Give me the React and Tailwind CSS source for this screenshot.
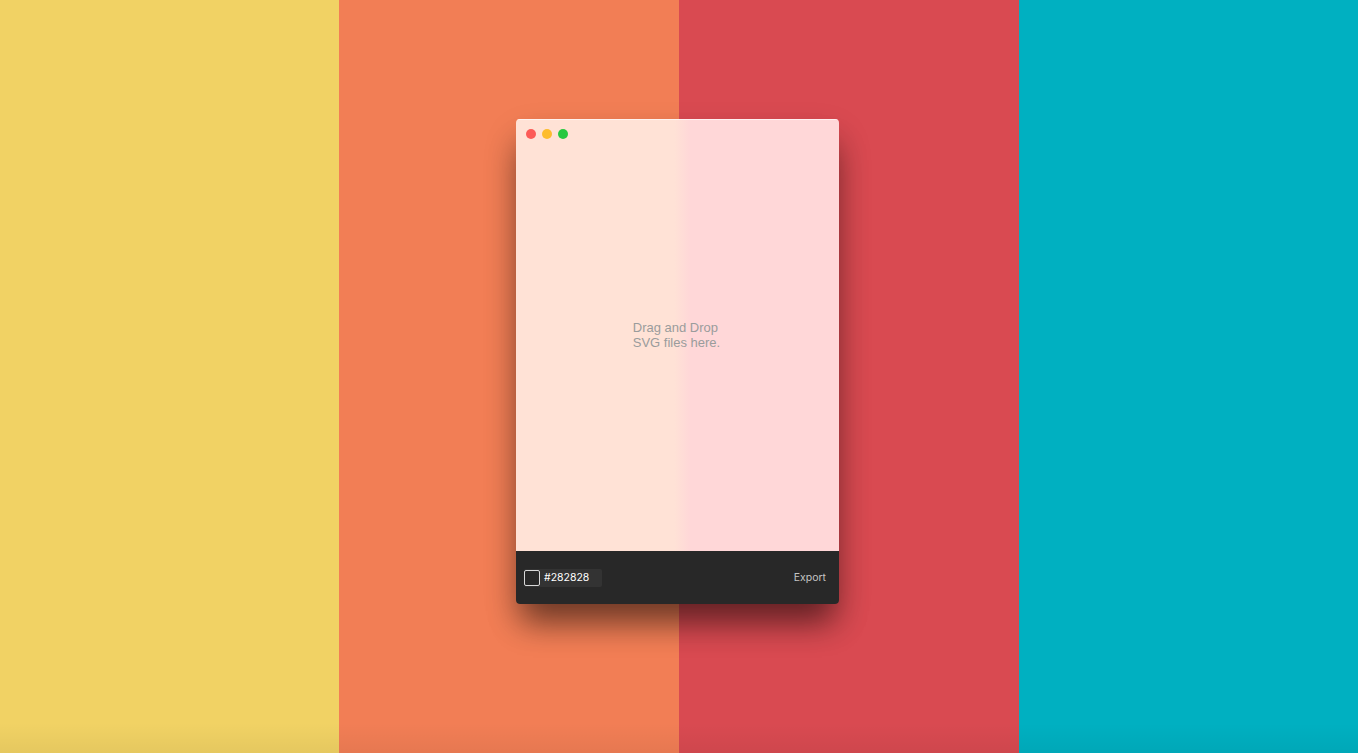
export default function App() {
    return (
        <div className="relative h-[753px] w-full overflow-hidden" style={{ fontFamily: '"Liberation Sans", Arial, sans-serif' }}>
            <div className="flex h-full">
                <div className="w-[339px] bg-[#f1d264]" />
                <div className="w-[340px] bg-[#f27e55]" />
                <div className="w-[340px] bg-[#d94a51]" />
                <div className="flex-1 bg-[#00b0c1]" />
            </div>
            <div className="absolute inset-x-0 bottom-0 h-[30px] bg-gradient-to-b from-transparent to-black/5" />

            <div className="absolute inset-0 flex justify-center pt-[119px] pr-[3px]">
                <div className="flex h-[485px] w-[323px] flex-col overflow-hidden rounded-[4px] shadow-[0_24px_30px_-6px_rgba(0,0,0,0.45),0_16px_36px_-2px_rgba(0,0,0,0.2)]">
                    <div className="relative flex flex-1 flex-col bg-[linear-gradient(90deg,#ffe2d6_0%,#ffe2d6_49%,#ffd7d8_54%,#ffd7d8_100%)] shadow-[inset_0_1px_0_rgba(255,255,255,0.6)]">
                        <div className="flex gap-[6px] pl-[10px] pt-[9.5px]">
                            <span className="h-[10px] w-[10px] rounded-full bg-[#fc5b57]" />
                            <span className="h-[10px] w-[10px] rounded-full bg-[#fdbc2e]" />
                            <span className="h-[10px] w-[10px] rounded-full bg-[#27c840]" />
                        </div>
                        <div className="flex flex-1 items-center justify-center pb-[19px] pr-[2px]">
                            <p className="text-[13px] leading-[15px] text-[#9a9c9c]">
                                Drag and Drop
                                <br />
                                SVG files here.
                            </p>
                        </div>
                    </div>
                    <div className="flex h-[53px] items-center justify-between bg-[#282828] pl-[8px] pr-[13px]">
                        <div className="flex h-[18px] w-[78px] items-center rounded-[2px] bg-[#333333]">
                            <span className="box-border h-[16px] w-[16px] rounded-[2px] border border-[#d8d8d8] bg-[#282828]" />
                            <span className="ml-[4px] text-[10.5px] text-white" style={{ fontFamily: 'Inter, sans-serif' }}>#282828</span>
                        </div>
                        <span className="text-[10.5px] leading-[18px] text-[#c4c4c4]" style={{ fontFamily: 'Inter, sans-serif' }}>Export</span>
                    </div>
                </div>
            </div>
        </div>
    );
}
